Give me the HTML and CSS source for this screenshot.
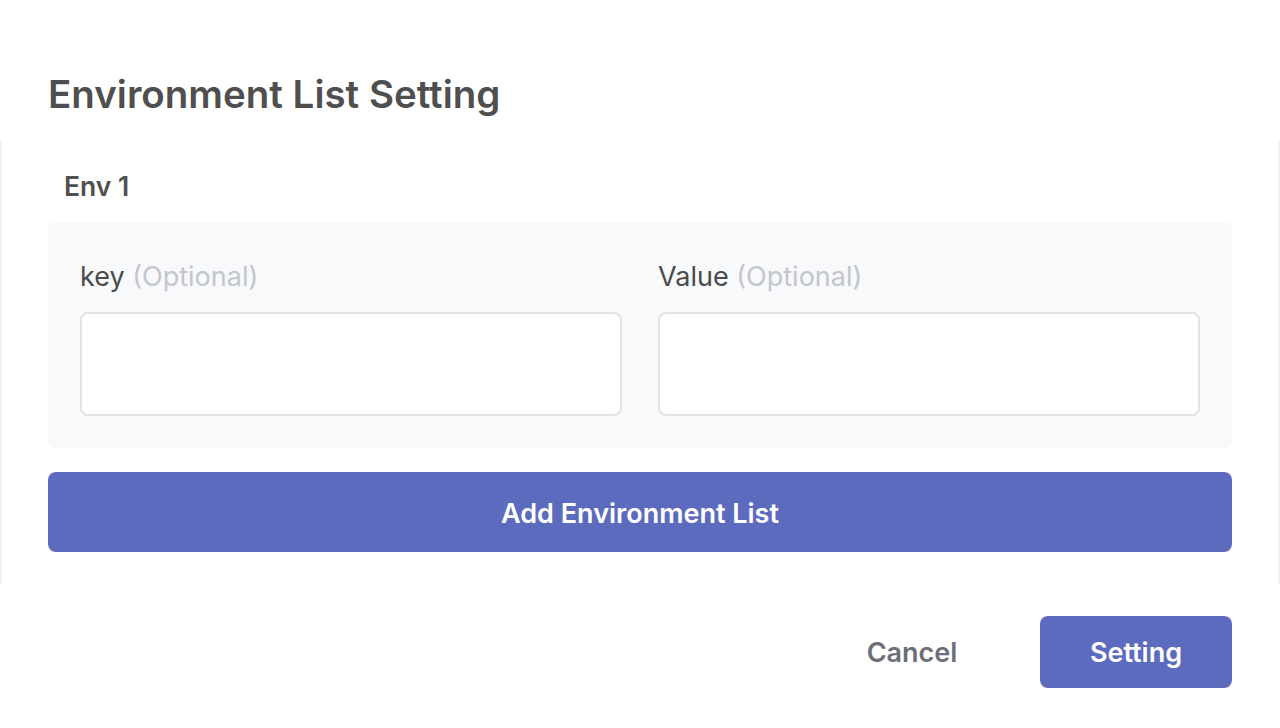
FILE: index.html
```html
<!DOCTYPE html>
<html lang="en">
<head>
<meta charset="utf-8">
<title>Environment List Setting</title>
<link rel="stylesheet" href="styles.css">
</head>
<body>
<div class="dialog">
  <header class="dialog-header">
    <h1 class="dialog-title">Environment List Setting</h1>
  </header>
  <main class="dialog-body">
    <div class="env-label">Env 1</div>
    <div class="env-card">
      <div class="field">
        <label class="field-label">key <span class="optional">(Optional)</span></label>
        <input class="field-input" type="text">
      </div>
      <div class="field">
        <label class="field-label">Value <span class="optional">(Optional)</span></label>
        <input class="field-input" type="text">
      </div>
    </div>
    <button class="add-btn" type="button">Add Environment List</button>
  </main>
  <footer class="dialog-footer">
    <button class="btn btn-cancel" type="button">Cancel</button>
    <button class="btn btn-primary" type="button">Setting</button>
  </footer>
</div>
</body>
</html>
```

FILE: styles.css
```css
* { box-sizing: border-box; }
html, body {
  margin: 0;
  padding: 0;
  background: #ffffff;
  font-family: Inter, "Noto Sans", sans-serif;
}
.dialog {
  width: 1280px;
  height: 728px;
  display: flex;
  flex-direction: column;
}
.dialog-header {
  padding: 70px 48px 22px;
}
.dialog-title {
  margin: 0;
  font-size: 38.5px;
  line-height: 48px;
  font-weight: 600;
  color: #4f4f4f;
}
.dialog-body {
  height: 444px;
  border-left: 2px solid #f3f3f4;
  border-right: 2px solid #f3f3f4;
  padding: 30px 46px 32px;
  display: flex;
  flex-direction: column;
}
.env-label {
  padding-left: 16px;
  font-size: 26.5px;
  line-height: 32px;
  font-weight: 600;
  color: #505050;
  margin-bottom: 20px;
}
.env-card {
  background: #f8f9fb;
  border-radius: 8px;
  padding: 32px;
  display: grid;
  grid-template-columns: 1fr 1fr;
  column-gap: 36px;
}
.field {
  display: flex;
  flex-direction: column;
  gap: 14px;
}
.field-label {
  font-size: 27px;
  line-height: 44px;
  padding-top: 1px;
  margin-bottom: -1px;
  color: #4a4a4a;
}
.optional {
  color: #c3c5cf;
}
.field-input {
  height: 104px;
  border: 2px solid #e1e3e8;
  border-radius: 8px;
  background: #ffffff;
  width: 100%;
  font: inherit;
  outline: none;
}
.add-btn {
  margin-top: 24px;
  height: 80px;
  padding-top: 3px;
  border: none;
  border-radius: 8px;
  background: #5d6bbe;
  color: #ffffff;
  font-family: inherit;
  font-size: 27px;
  font-weight: 600;
  cursor: pointer;
}
.dialog-footer {
  display: flex;
  justify-content: flex-end;
  gap: 32px;
  padding: 32px 48px;
}
.btn {
  width: 192px;
  height: 72px;
  padding-top: 2px;
  border: none;
  border-radius: 8px;
  font-family: inherit;
  font-size: 27px;
  font-weight: 600;
  cursor: pointer;
}
.btn-cancel {
  background: transparent;
  color: #6c6e79;
}
.btn-primary {
  background: #5d6bbe;
  color: #ffffff;
}
```
